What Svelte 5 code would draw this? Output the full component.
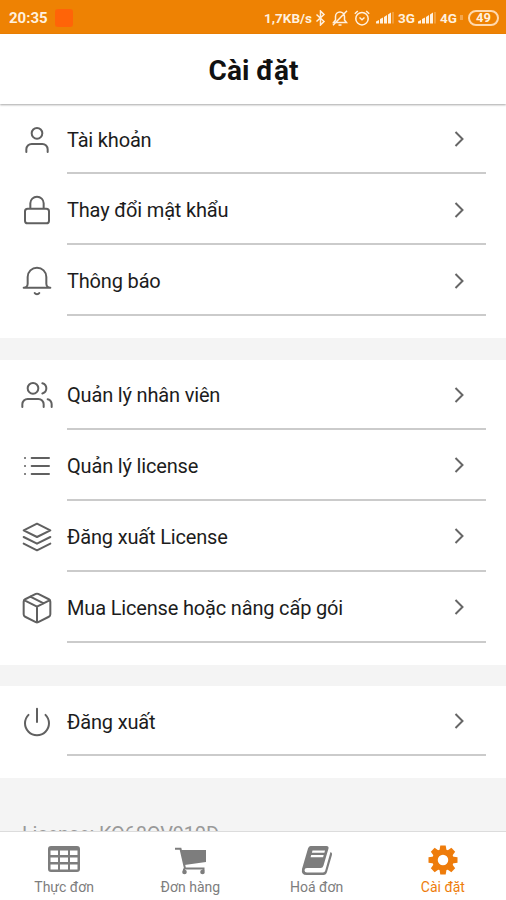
<script lang="ts">
  type Row = { icon: string; label: string };

  const groups: Row[][] = [
    [
      { icon: "user", label: "Tài khoản" },
      { icon: "lock", label: "Thay đổi mật khẩu" },
      { icon: "bell", label: "Thông báo" },
    ],
    [
      { icon: "users", label: "Quản lý nhân viên" },
      { icon: "list", label: "Quản lý license" },
      { icon: "layers", label: "Đăng xuất License" },
      { icon: "package", label: "Mua License hoặc nâng cấp gói" },
    ],
    [{ icon: "power", label: "Đăng xuất" }],
  ];

  const paths: Record<string, string> = {
    user: "M20 21v-2a4 4 0 0 0-4-4H8a4 4 0 0 0-4 4v2M12 3a4 4 0 1 1 0 8 4 4 0 0 1 0-8z",
    lock: "M5 11h14a2 2 0 0 1 2 2v7a2 2 0 0 1-2 2H5a2 2 0 0 1-2-2v-7a2 2 0 0 1 2-2zM7 11V7a5 5 0 0 1 10 0v4",
    bell: "M22 17H2a3 3 0 0 0 3-3V9a7 7 0 0 1 14 0v5a3 3 0 0 0 3 3zM13.73 21a2 2 0 0 1-3.46 0",
    users:
      "M17 21v-2a4 4 0 0 0-4-4H5a4 4 0 0 0-4 4v2M9 3a4 4 0 1 1 0 8 4 4 0 0 1 0-8zM23 21v-2a4 4 0 0 0-3-3.87M16 3.13a4 4 0 0 1 0 7.75",
    list: "M8 6h13M8 12h13M8 18h13M3 6h.01M3 12h.01M3 18h.01",
    layers: "M12 2 2 7l10 5 10-5-10-5zM2 17l10 5 10-5M2 12l10 5 10-5",
    package:
      "M12.89 1.45l8 4A2 2 0 0 1 22 7.24v9.53a2 2 0 0 1-1.11 1.79l-8 4a2 2 0 0 1-1.79 0l-8-4a2 2 0 0 1-1.1-1.8V7.24a2 2 0 0 1 1.11-1.79l8-4a2 2 0 0 1 1.78 0zM2.32 6.16 12 11l9.68-4.84M12 22.76V11M7 3.5l10 5",
    power: "M18.36 6.64a9 9 0 1 1-12.73 0M12 2v10",
  };

  const tabs = [
    { icon: "table", label: "Thực đơn" },
    { icon: "cart", label: "Đơn hàng" },
    { icon: "book", label: "Hoá đơn" },
    { icon: "gear", label: "Cài đặt" },
  ];

  let active = $state("gear");
</script>

{#snippet signal()}
  <svg class="signal" width="19" height="13" viewBox="0 0 19 13">
    <path d="M0 12.500v-2l3-1.500v3.500zM4 12.500v-4.500l3-1.500v6zM8 12.500v-6.500l3-2v8.500zM12 12.500V3.500l3-2v11z" fill="currentColor" />
    <path d="M17 1v11.500" stroke="currentColor" opacity=".35" />
  </svg>
{/snippet}

<div class="screen">
  <div class="status">
    <span class="clock">20:35</span>
    <span class="app-dot"></span>
    <div class="status-right">
      <span class="speed">1,7KB/s</span>
      <svg class="bt" width="11" height="16" viewBox="0 0 11 16">
        <path d="M1.500 4.500 9 11.500 5.500 15V1L9 4.500 1.500 11.500" />
      </svg>
      <svg class="mute" width="16" height="16" viewBox="0 0 16 16">
        <path d="M1.500 12.500h13l-2-2.500V6.500a4.500 4.500 0 0 0-9 0V10zM6.500 15h3M15 .800 1 15.200" />
      </svg>
      <svg class="alarm" width="16" height="16" viewBox="0 0 16 16">
        <circle cx="8" cy="8.700" r="6.200" />
        <path d="M5.500 7.500 8 9.700l2.500-2.200M.800 3.800 3.800 1M15.200 3.800l-3-2.800" />
      </svg>
      {@render signal()}
      <span class="net">3G</span>
      {@render signal()}
      <span class="net">4G</span>
      <span class="faint"></span>
      <span class="battery">49</span>
    </div>
  </div>

  <header>
    <h1>Cài đặt</h1>
  </header>

  <main>
    {#each groups as group}
      <section>
        {#each group as row}
          <button class="row">
            <svg class="row-icon" viewBox="0 0 24 24"><path d={paths[row.icon]} /></svg>
            <span class="row-body">
              <span class="row-label">{row.label}</span>
              <svg class="chevron" viewBox="0 0 24 24"><path d="m9 18 6-6-6-6" /></svg>
            </span>
          </button>
        {/each}
      </section>
    {/each}
    <p class="license">License: KO68OV910D</p>
  </main>

  <nav>
    {#each tabs as tab}
      <button class="tab" class:active={active === tab.icon} onclick={() => (active = tab.icon)}>
        <svg width="34" height="32" viewBox="0 0 34 32" fill="currentColor">
          {#if tab.icon === "table"}
            <path
              fill-rule="evenodd"
              d="M4 2h26q3 0 3 3v20q0 3-3 3H4q-3 0-3-3V5q0-3 3-3zM3.500 6.500v4.500h7.500V6.500zM13 6.500v4.500h8V6.500zM23 6.500v4.500h7.500V6.500zM3.500 13.500v4.500h7.500v-4.500zM13 13.500v4.500h8v-4.500zM23 13.500v4.500h7.500v-4.500zM3.500 20.500v5h7.500v-5zM13 20.500v5h8v-5zM23 20.500v5h7.500v-5z"
            />
          {:else if tab.icon === "cart"}
            <path d="M8 6h25v12L11.500 21z" />
            <path d="M2 4.800h5.500L12 24.500h18.500V27M11 27v-2.500" fill="none" stroke="currentColor" stroke-width="2" />
            <circle cx="11.500" cy="28" r="2.300" />
            <circle cx="29.500" cy="28" r="2.300" />
          {:else if tab.icon === "book"}
            <path
              fill-rule="evenodd"
              d="M10.500 2h16q2.500 0 2 2.500l-5 17q-.7 2.500-3 2.500H7q-2.500 0-2.500 2.200T7 28.500h16q1.700 0 2.200-1.700L30.500 8q2 .8 1.500 2.800L27 28q-.8 3-3.500 3H6.500Q1 31 2 25L8 4.500Q8.700 2 10.500 2zM12.500 6.500l-.6 2.200h12.500l.6-2.200zM11.200 11l-.6 2.200h12.500l.6-2.200z"
            />
          {:else}
            <g transform="translate(17 16)">
              {#each [0, 45, 90, 135, 180, 225, 270, 315] as angle}
                <path d="M-3.600-9-2.700-14.500h5.400L3.600-9z" transform="rotate({angle})" />
              {/each}
              <circle r="8" fill="none" stroke="currentColor" stroke-width="5.500" />
            </g>
          {/if}
        </svg>
        <span>{tab.label}</span>
      </button>
    {/each}
  </nav>
</div>

<style>
  :global(body) {
    margin: 0;
  }

  .screen {
    width: 506px;
    height: 900px;
    display: flex;
    flex-direction: column;
    overflow: hidden;
    background: #f4f4f4;
    font-family: Roboto, sans-serif;
  }

  button {
    padding: 0;
    border: 0;
    background: none;
    font: inherit;
    color: inherit;
  }

  .status {
    flex: none;
    height: 34px;
    display: flex;
    align-items: center;
    box-sizing: border-box;
    padding: 1px 7px 0 9px;
    background: #ee8203;
    color: #fff0de;
    font-weight: 700;
  }

  .clock {
    width: 46px;
    font-size: 15px;
  }

  .app-dot {
    width: 18px;
    height: 18px;
    border-radius: 3px;
    background: #ff6408;
  }

  .status-right {
    margin-left: auto;
    display: flex;
    align-items: center;
    font-size: 13.5px;
  }

  .status-right svg {
    fill: none;
    stroke: currentColor;
    stroke-width: 1.5;
  }

  .status-right .signal {
    stroke: none;
    margin-right: 3px;
  }

  .bt {
    margin: 0 6px 0 3px;
  }

  .mute {
    margin-right: 6px;
  }

  .alarm {
    margin-right: 6px;
  }

  .net {
    width: 20px;
  }

  .faint {
    width: 3px;
    height: 5px;
    margin-right: 5px;
    background: #f4a64d;
  }

  .battery {
    width: 27px;
    height: 12px;
    border: 2px solid #ffd9ae;
    border-radius: 8px;
    font-size: 13px;
    line-height: 12px;
    text-align: center;
  }

  header {
    flex: none;
    height: 70px;
    display: grid;
    place-items: center;
    background: #fff;
    box-shadow: 0 1px 2px rgb(0 0 0 / 35%);
    z-index: 1;
  }

  h1 {
    margin: 3px 0 0 1px;
    font-size: 28px;
    font-weight: 700;
    line-height: 32px;
    color: #111;
  }

  main {
    flex: 1;
    min-height: 0;
    overflow: hidden;
  }

  section {
    padding-bottom: 22px;
    margin-bottom: 21.5px;
    background: #fff;
  }

  .row {
    width: 100%;
    height: 71.1px;
    display: flex;
    align-items: stretch;
    padding: 0 20px 0 21px;
    text-align: left;
  }

  .row:first-child {
    height: 70px;
  }

  .row-icon {
    width: 32px;
    height: 32px;
    margin: 1px 14px 0 0;
    align-self: center;
    fill: none;
    stroke: #606060;
    stroke-width: 1.5;
    stroke-linejoin: round;
    stroke-linecap: round;
  }

  .row-body {
    flex: 1;
    display: flex;
    align-items: center;
    border-bottom: 2px solid #cbcbcb;
  }

  .row-label {
    flex: 1;
    padding-top: 3px;
    font-size: 20px;
    letter-spacing: -0.17px;
    color: #1c1c1c;
  }

  .chevron {
    width: 28px;
    height: 28px;
    margin: 2px 13px 0 0;
    fill: none;
    stroke: #666;
    stroke-width: 1.7;
  }

  .license {
    margin: 44px 22px 0;
    font-size: 20px;
    line-height: 24px;
    letter-spacing: -0.17px;
    color: #999;
  }

  nav {
    flex: none;
    height: 69px;
    box-sizing: border-box;
    display: grid;
    grid-template-columns: repeat(4, 1fr);
    padding-left: 1px;
    border-top: 1px solid #dcdcdc;
    background: #fff;
  }

  .tab {
    display: flex;
    flex-direction: column;
    align-items: center;
    gap: 2px;
    padding-top: 12px;
    font-size: 14px;
    line-height: 18px;
    color: #7d7d7d;
  }

  .tab.active {
    color: #ee7c0b;
  }
</style>
